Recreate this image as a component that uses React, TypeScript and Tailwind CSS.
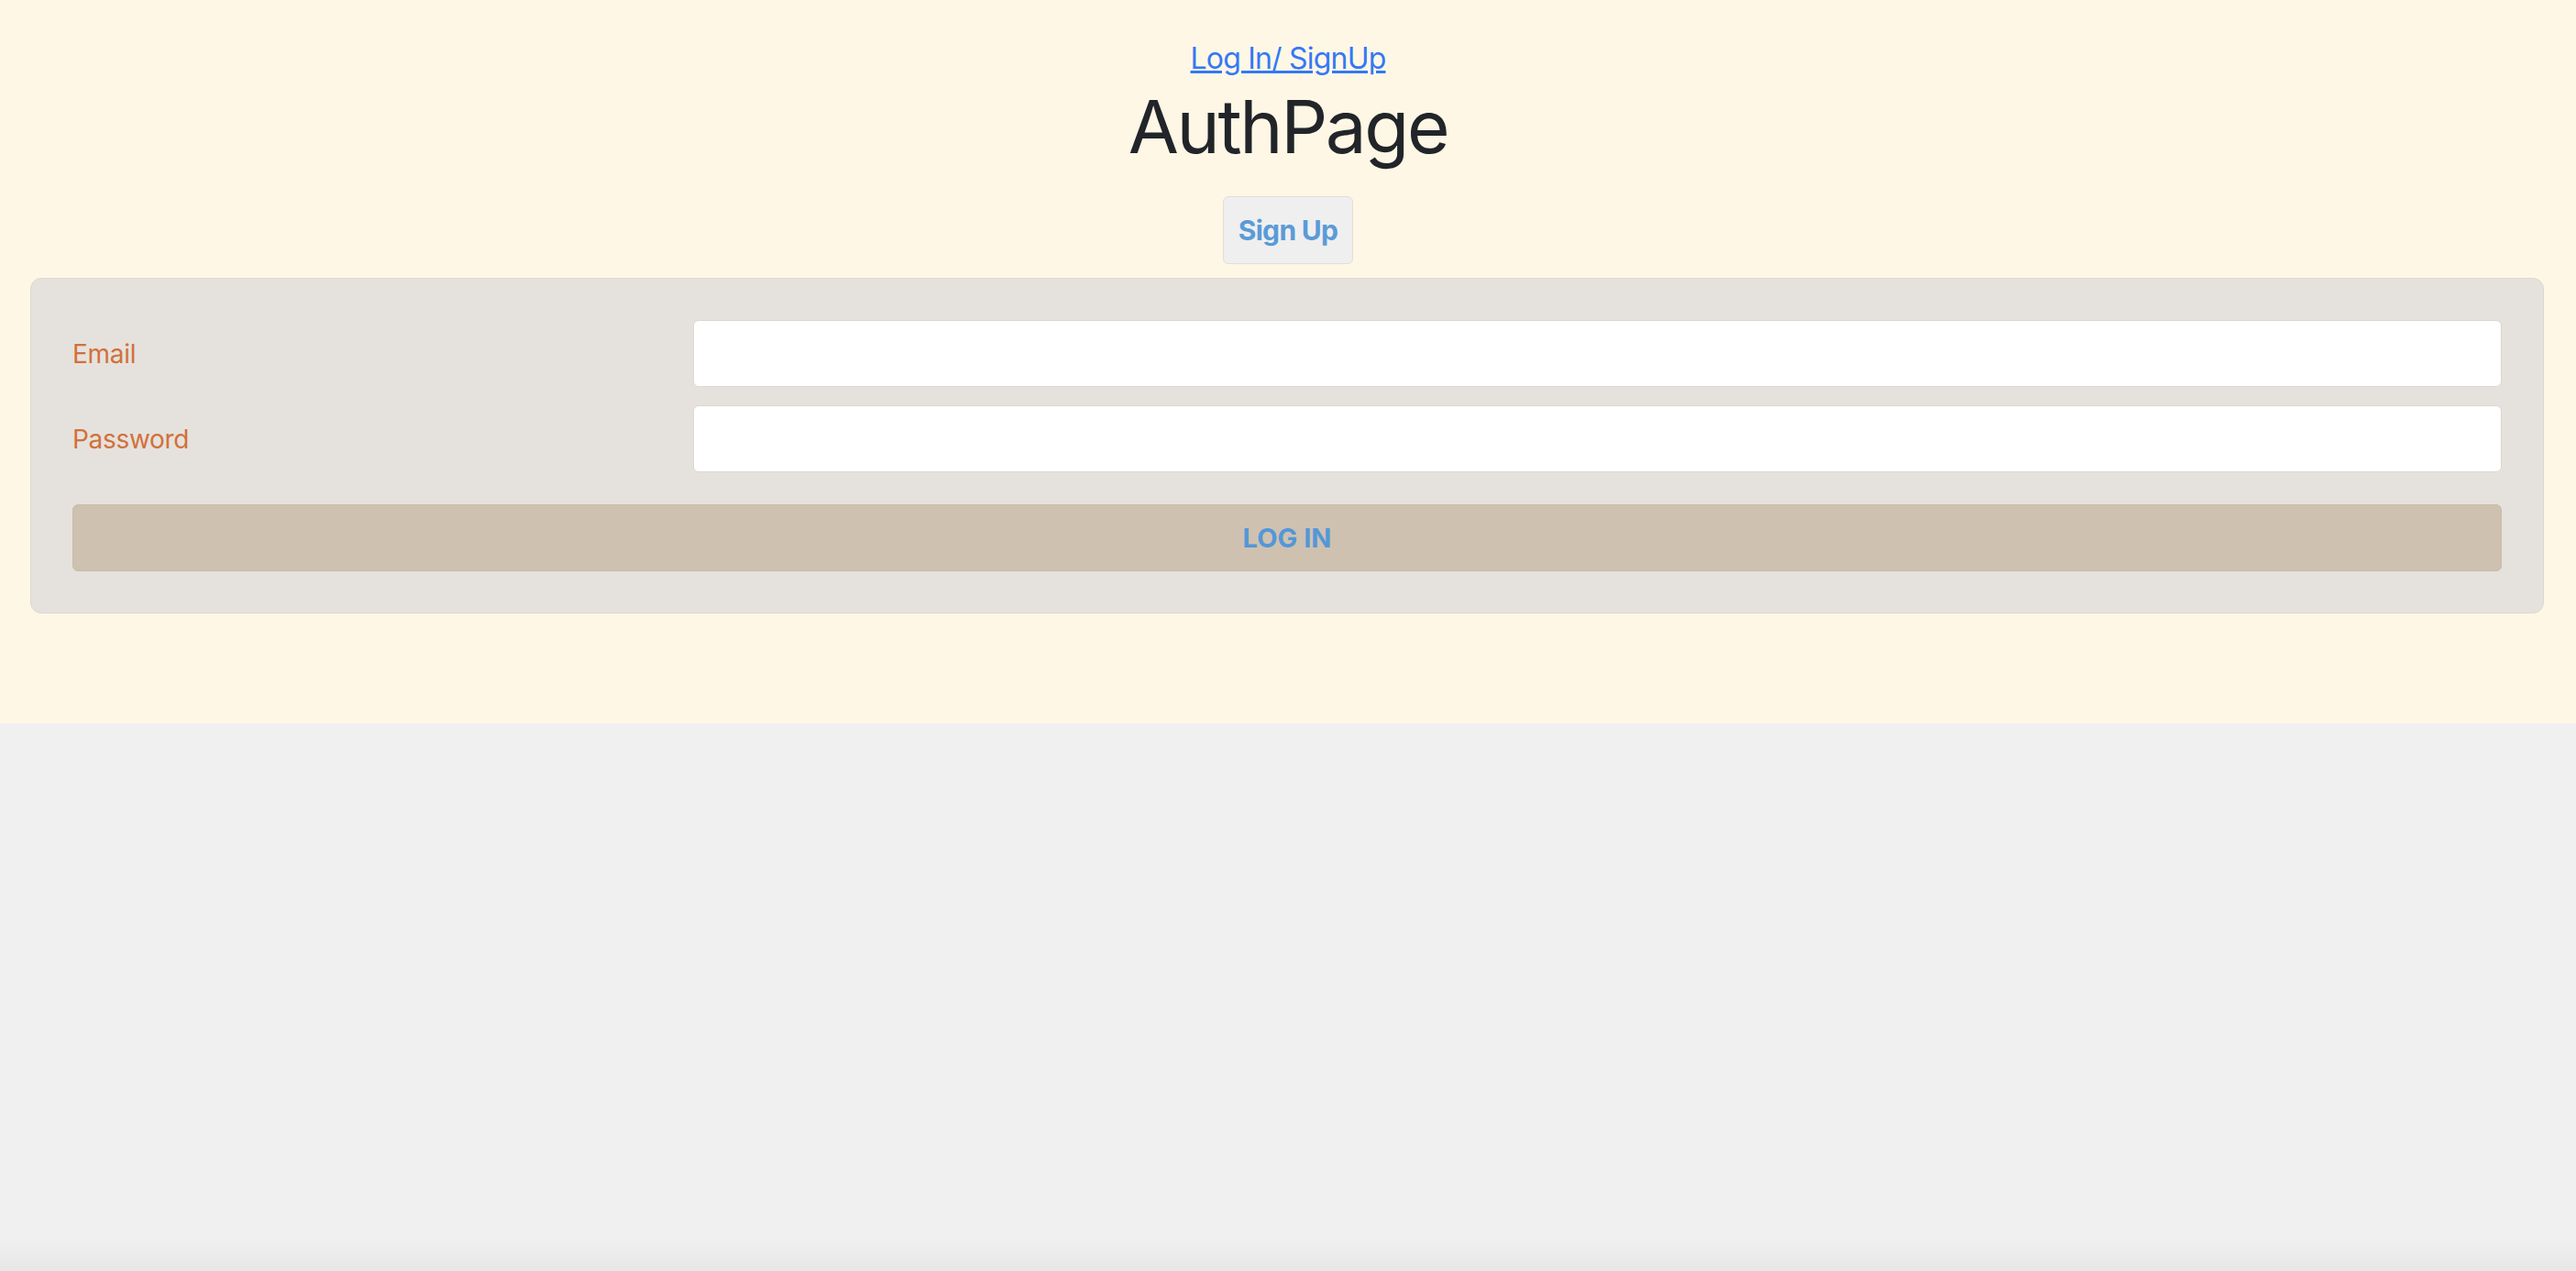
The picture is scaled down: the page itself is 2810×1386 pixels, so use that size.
import React from "react";

const fieldRows = [
  { id: "email", label: "Email", type: "email" },
  { id: "password", label: "Password", type: "password" },
];

export default function App() {
  return (
    <div className="flex min-h-screen flex-col bg-[#f0f0f0] font-['Inter','Noto_Sans',sans-serif] text-[#212529]">
      <section className="bg-[#fef7e5] pb-[120px] pt-[40px]">
        <div className="flex flex-col items-center">
          <a href="#" className="text-[32px] leading-[48px] tracking-[-0.8px] text-[#3478f6] underline">
            Log In/ SignUp
          </a>
          <h1 className="mt-[2px] text-[80px] font-normal leading-[96px] tracking-[-2.4px]">AuthPage</h1>
          <button className="mt-[28px] h-[74px] rounded-[6px] border border-[#e2ded8] bg-[#efefef] px-[16px] text-[30px] font-bold tracking-[-0.7px] text-[#5a9bd8]">
            Sign Up
          </button>
        </div>

        {/* login card */}
        <form className="ml-[33px] mr-[35px] mt-[15px] rounded-[12px] border border-[#ddd7cf] bg-[#e5e2dd] p-[45px]">
          <div className="flex flex-col gap-[20px]">
            {fieldRows.map((row) => (
              <div key={row.id} className="flex items-center">
                <label htmlFor={row.id} className="w-[677px] text-[28px] tracking-[-0.3px] text-[#d2703a]">
                  {row.label}
                </label>
                <input
                  id={row.id}
                  type={row.type}
                  className="h-[73px] flex-1 rounded-[6px] border border-[#dcd6cf] bg-white px-4 text-[28px] outline-none"
                />
              </div>
            ))}
          </div>
          <button
            type="button"
            className="mt-[35px] h-[73px] w-full rounded-[6px] border border-[#c9bba9] bg-[#cfc1b0] text-[29px] font-bold text-[#5397d8]"
          >
            LOG IN
          </button>
        </form>
      </section>

      <div className="flex-1" />
      <div className="h-[36px] bg-gradient-to-b from-[#f0f0f0] to-[#e7e7e7]" />
    </div>
  );
}
